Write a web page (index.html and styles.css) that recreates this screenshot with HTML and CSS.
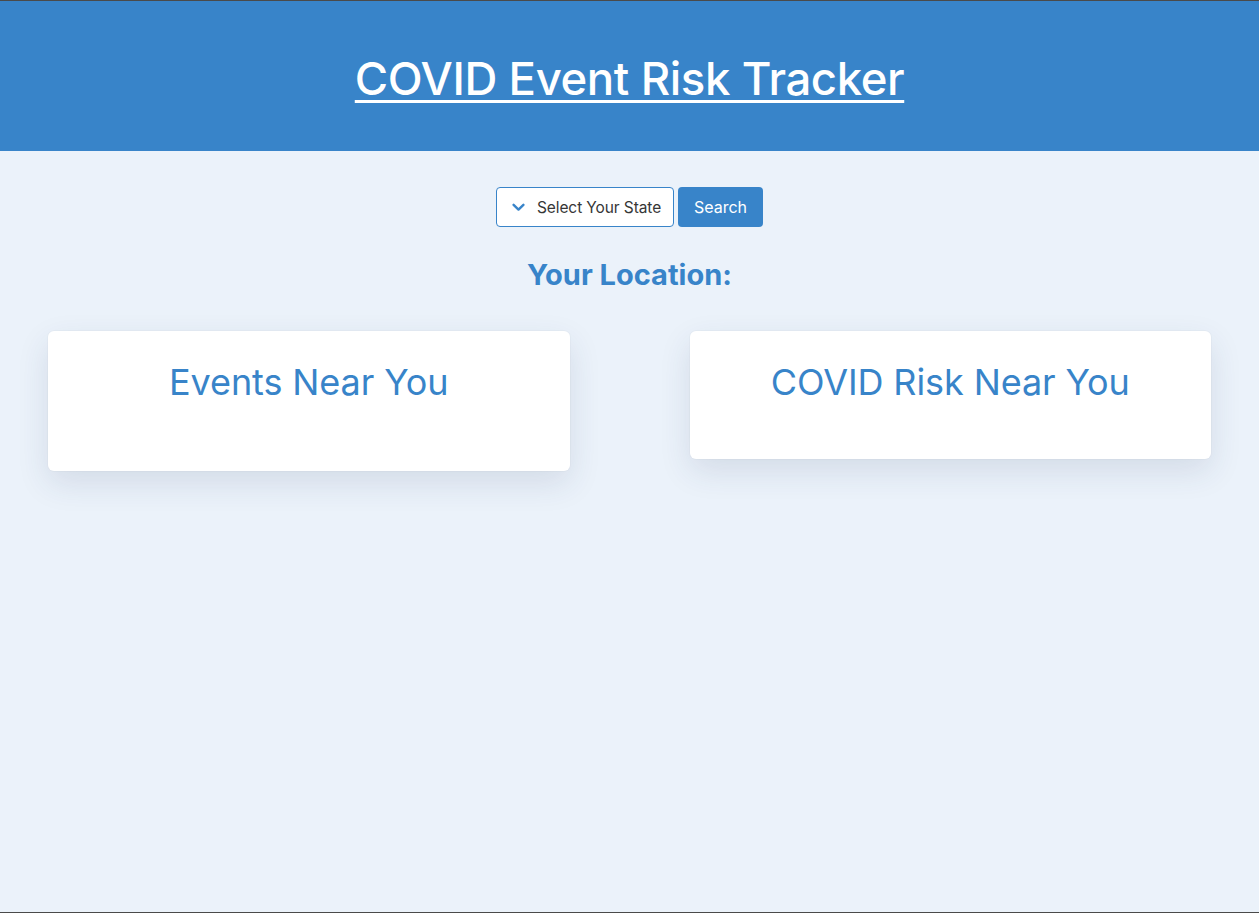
FILE: index.html
```html
<!DOCTYPE html>
<html lang="en">
<head>
<meta charset="utf-8">
<title>COVID Event Risk Tracker</title>
<link rel="stylesheet" href="styles.css">
</head>
<body>
<div class="frame">
  <header class="hero">
    <h1 class="title"><a href="#">COVID Event Risk Tracker</a></h1>
  </header>
  <main class="main">
    <div class="search-row">
      <div class="select">
        <svg class="chevron" width="13" height="9" viewBox="0 0 13 9"><path d="M1.6 1.8 L6.5 6.6 L11.4 1.8" fill="none" stroke="#3884c9" stroke-width="2.4" stroke-linecap="round" stroke-linejoin="round"/></svg>
        <span class="select-text">Select Your State</span>
      </div>
      <button class="btn">Search</button>
    </div>
    <h2 class="location">Your Location:</h2>
    <div class="columns">
      <section class="card card-events">
        <h3 class="card-title">Events Near You</h3>
      </section>
      <section class="card card-risk">
        <h3 class="card-title">COVID Risk Near You</h3>
      </section>
    </div>
  </main>
</div>
</body>
</html>
```

FILE: styles.css
```css
* { box-sizing: border-box; }
html, body { margin: 0; padding: 0; }
body {
  font-family: Inter, "Noto Sans", "Liberation Sans", sans-serif;
  background: #ebf2fa;
  color: #363636;
}
.frame {
  min-height: 913px;
  border-top: 1px solid #4a4a4a;
  border-bottom: 1px solid #4a4a4a;
  display: flex;
  flex-direction: column;
}
.hero {
  background: #3884c9;
  height: 150px;
  display: flex;
  align-items: center;
  justify-content: center;
  padding-top: 6px;
}
.title {
  margin: 0;
  font-size: 45.5px;
  font-weight: 500;
  letter-spacing: -0.4px;
  line-height: 1.2;
}
.title a {
  color: #fff;
  text-decoration: underline;
  text-decoration-thickness: 3px;
  text-underline-offset: 5px;
}
.main {
  flex: 1;
  display: flex;
  flex-direction: column;
  align-items: center;
  padding-top: 36px;
}
.search-row {
  display: flex;
  gap: 4px;
}
.select {
  height: 40px;
  width: 178px;
  border: 1px solid #3884c9;
  border-radius: 4px;
  background: #fff;
  display: flex;
  align-items: center;
  padding-left: 15px;
  gap: 12px;
  font-size: 15.5px;
  letter-spacing: -0.1px;
  color: #363636;
}
.chevron { display: block; }
.btn {
  height: 40px;
  width: 85px;
  border: none;
  border-radius: 4px;
  background: #3884c9;
  color: #fff;
  font-family: inherit;
  font-size: 16px;
  padding: 0;
}
.location {
  margin: 30px 0 0;
  color: #3884c9;
  font-size: 29px;
  font-weight: 700;
  line-height: 36px;
}
.columns {
  align-self: stretch;
  display: flex;
  align-items: flex-start;
  gap: 120px;
  padding: 0 48px;
  margin-top: 38px;
}
.card {
  flex: 1;
  background: #fff;
  border-radius: 6px;
  box-shadow: 0 12px 32px rgba(40, 60, 100, 0.12), 0 0 0 1px rgba(10, 10, 10, 0.02);
  text-align: center;
  padding-top: 27px;
}
.card-events { height: 140px; }
.card-risk { height: 128px; }
.card-title {
  margin: 0;
  color: #3884c9;
  font-size: 36px;
  font-weight: 400;
  letter-spacing: -0.1px;
  line-height: 48px;
}
```
